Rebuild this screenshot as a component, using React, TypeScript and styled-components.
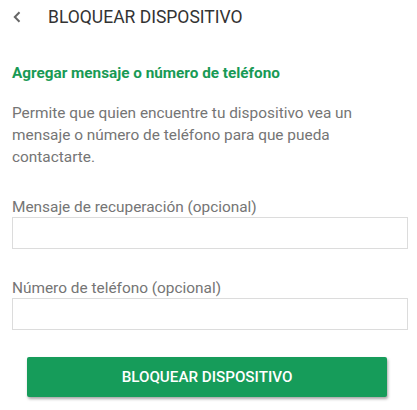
import React from "react";
import styled, { createGlobalStyle } from "styled-components";

const GlobalStyle = createGlobalStyle`
  html, body {
    margin: 0;
    padding: 0;
    background: #ffffff;
  }
  body {
    font-family: Roboto, "Liberation Sans", Arial, sans-serif;
    -webkit-font-smoothing: antialiased;
  }
`;

const Page = styled.div`
  width: 417px;
  min-height: 410px;
  background: #fff;
`;

const Header = styled.header`
  height: 34px;
  display: flex;
  align-items: center;
  padding-left: 12px;
`;

const BackButton = styled.button`
  display: flex;
  align-items: center;
  justify-content: center;
  width: 10px;
  height: 14px;
  padding: 0;
  margin: 0 26px 0 0;
  border: none;
  background: none;
  color: #666;
  cursor: pointer;
`;

const Title = styled.h1`
  margin: 0;
  font-size: 17.5px;
  font-weight: 400;
  color: #333;
  text-transform: uppercase;
`;

const Content = styled.main`
  padding: 0 9px 0 12px;
  display: flex;
  flex-direction: column;
`;

const Heading = styled.h2`
  margin: 29px 0 0;
  font-size: 15.3px;
  line-height: 20px;
  font-weight: 700;
  color: #189a55;
`;

const Description = styled.p`
  margin: 19px 0 0;
  font-size: 15.4px;
  line-height: 22px;
  color: #757575;
  max-width: 370px;
`;

const Field = styled.label<{ $gap: number }>`
  display: flex;
  flex-direction: column;
  margin-top: ${(p) => p.$gap}px;
`;

const FieldLabel = styled.span`
  font-size: 15.4px;
  line-height: 20px;
  color: #757575;
`;

const Input = styled.input`
  box-sizing: border-box;
  height: 32px;
  width: 100%;
  margin: 0;
  border: 1px solid #dcdcdc;
  border-radius: 0;
  padding: 0 8px;
  font: inherit;
  font-size: 15px;
  outline: none;
`;

const Actions = styled.div`
  display: flex;
  margin-top: 27px;
  padding-left: 15px;
`;

const PrimaryButton = styled.button`
  width: 360px;
  height: 40px;
  border: none;
  border-radius: 2px;
  background: #169c5a;
  color: #fff;
  font-family: Roboto, "Liberation Sans", Arial, sans-serif;
  font-size: 15.2px;
  font-weight: 500;
  text-transform: uppercase;
  box-shadow: 1px 2px 3px rgba(0, 0, 0, 0.35);
  cursor: pointer;
`;

const Chevron = () => (
  <svg width="8" height="12" viewBox="0 0 8 12" fill="none">
    <path d="M6.5 1.2 1.8 6l4.7 4.8" stroke="currentColor" strokeWidth="2" />
  </svg>
);

export default function App() {
  return (
    <Page>
      <GlobalStyle />
      <Header>
        <BackButton aria-label="Atrás">
          <Chevron />
        </BackButton>
        <Title>Bloquear dispositivo</Title>
      </Header>
      <Content>
        <Heading>Agregar mensaje o número de teléfono</Heading>
        <Description>
          Permite que quien encuentre tu dispositivo vea un mensaje o número de
          teléfono para que pueda contactarte.
        </Description>
        <Field $gap={29}>
          <FieldLabel>Mensaje de recuperación (opcional)</FieldLabel>
          <Input type="text" />
        </Field>
        <Field $gap={29}>
          <FieldLabel>Número de teléfono (opcional)</FieldLabel>
          <Input type="tel" />
        </Field>
        <Actions>
          <PrimaryButton>Bloquear dispositivo</PrimaryButton>
        </Actions>
      </Content>
    </Page>
  );
}
